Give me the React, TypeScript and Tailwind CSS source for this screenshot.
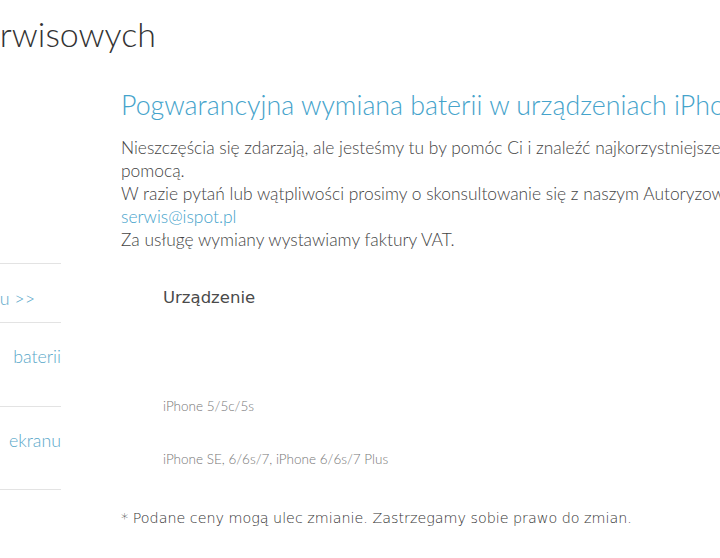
import clsx from 'clsx'

const sideLinks = [
  { label: 'Powrót do menu >>', className: 'h-[59px] pt-[23px] pr-[26px]' },
  { label: 'baterii', className: 'h-[84px] pt-[22px]' },
  { label: 'ekranu', className: 'h-[83px] pt-[22px]' },
]

const devices = ['iPhone 5/5c/5s', 'iPhone SE, 6/6s/7, iPhone 6/6s/7 Plus']

export default function App() {
  return (
    <div className="relative h-[558px] w-[720px] overflow-hidden bg-white font-['Lato',sans-serif] font-light text-[#444]">
      {/* page title, starts off to the left */}
      <div className="flex w-[156px] justify-end whitespace-nowrap pt-[12px]">
        <h1 className="text-[34px] leading-[44px] text-[#333]">Cennik usług serwisowych</h1>
      </div>

      <div className="mt-[33px] flex">
        {/* side menu */}
        <nav className="mt-[174px] w-[61px] shrink-0 whitespace-nowrap">
          <ul className="border-t border-[#e3e3e3]">
            {sideLinks.map((link) => (
              <li
                key={link.label}
                className={clsx('flex justify-end border-b border-[#e3e3e3] text-[17.8px] leading-[22px] text-[#5aa8c9]', link.className)}
              >
                <a href="#">{link.label}</a>
              </li>
            ))}
          </ul>
        </nav>

        {/* content */}
        <main className="ml-[60px] w-[780px] shrink-0">
          <h2 className="text-[26.8px] leading-[32px] text-[#45a3cb]">
            Pogwarancyjna wymiana baterii w urządzeniach iPhone
          </h2>
          <p className="mt-[15px] whitespace-nowrap text-[17.4px] leading-[23px] text-[#444]">
            Nieszczęścia się zdarzają, ale jesteśmy tu by pomóc Ci i znaleźć najkorzystniejsze rozwiązanie. Służymy
            <br />
            pomocą.
            <br />
            W razie pytań lub wątpliwości prosimy o skonsultowanie się z naszym Autoryzowanym Serwisem:
            <br />
            <a href="mailto:serwis@ispot.pl" className="text-[#45a3cb]">serwis@ispot.pl</a>
            <br />
            Za usługę wymiany wystawiamy faktury VAT.
          </p>

          <table className="mt-[26px] ml-[42px] border-collapse">
            <thead>
              <tr>
                <th className="h-[42px] text-left align-middle font-['DejaVu_Sans',sans-serif] text-[16.5px] font-normal text-[#4a4a4a]">
                  Urządzenie
                </th>
              </tr>
            </thead>
            <tbody>
              <tr>
                <td className="h-[61px]" />
              </tr>
              {devices.map((name) => (
                <tr key={name}>
                  <td className="h-[53px] align-middle text-[13.5px] text-[#777]">{name}</td>
                </tr>
              ))}
            </tbody>
          </table>

          <p className="mt-[22px] font-['DejaVu_Sans',sans-serif] text-[14.3px] text-[#333]">
            * Podane ceny mogą ulec zmianie. Zastrzegamy sobie prawo do zmian.
          </p>
        </main>
      </div>
    </div>
  )
}
